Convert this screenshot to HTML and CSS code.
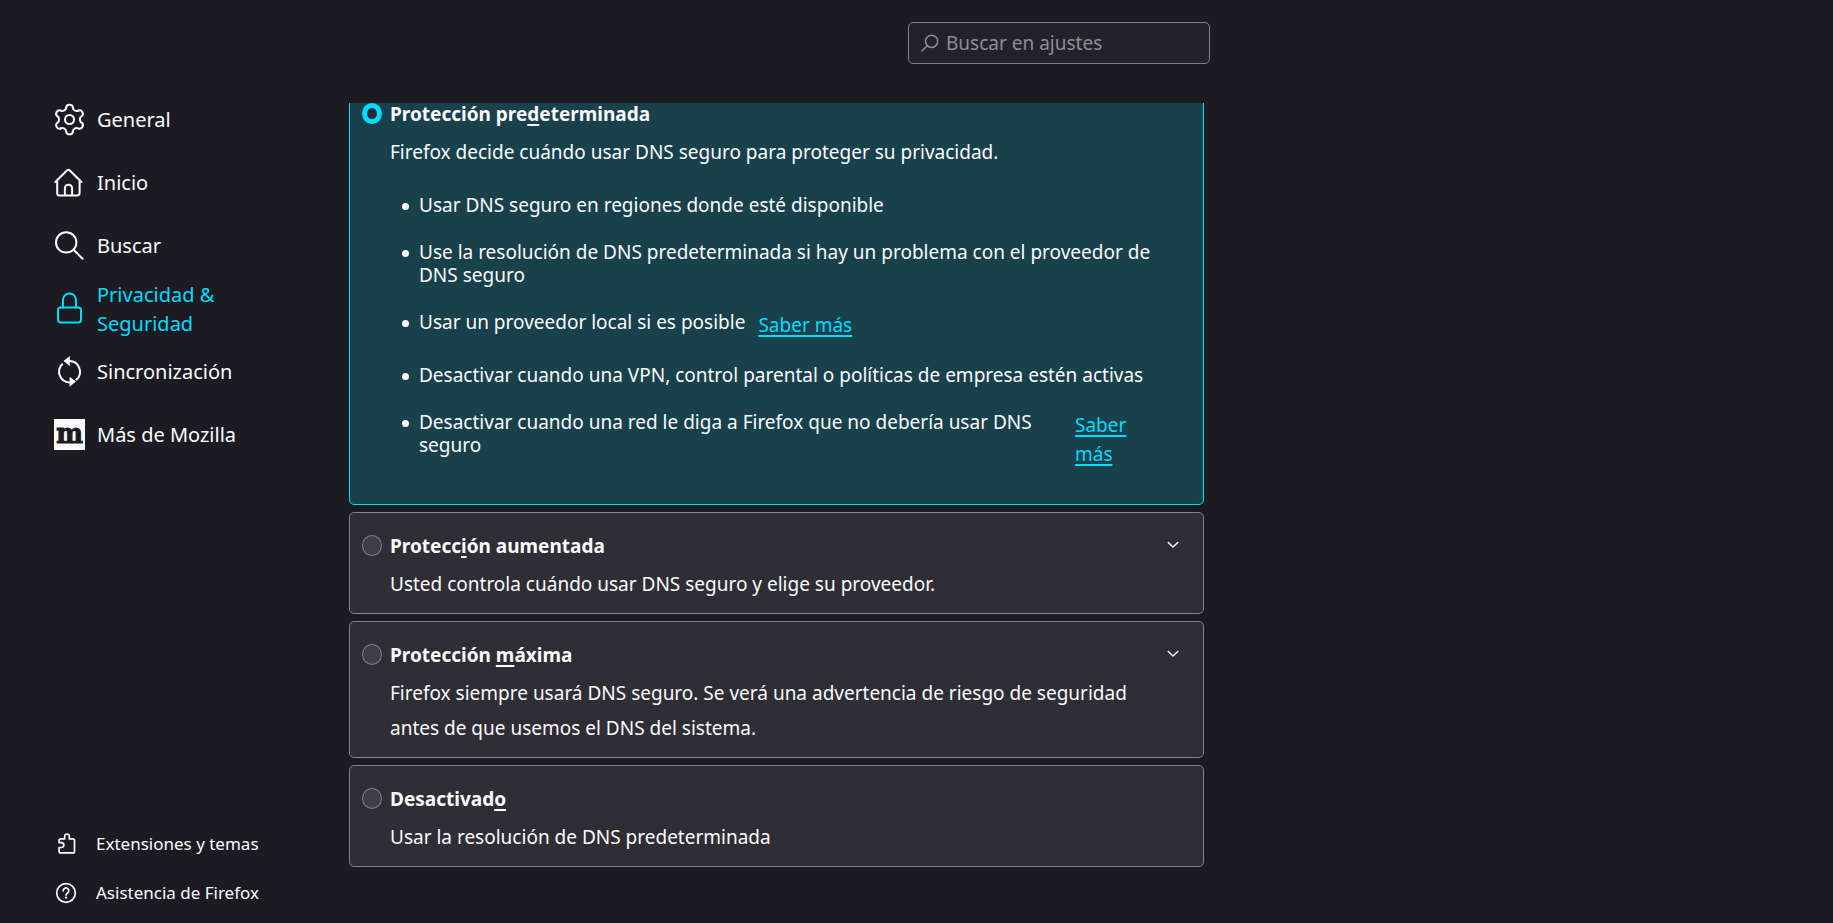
FILE: index.html
```html
<!DOCTYPE html>
<html lang="es">
<head>
<meta charset="utf-8">
<title>Ajustes</title>
<meta name="viewport" content="width=device-width, initial-scale=1">
<link rel="stylesheet" href="styles.css">
</head>
<body>
<div class="page">
  <aside class="sidebar">
    <nav class="categories" aria-label="Categorías">
      <a class="category" href="#general">
        <svg class="category-icon" viewBox="0 0 31 31" aria-hidden="true">
          <g transform="translate(15.5 15.5)">
            <path id="tooth" d="M-3.3-11.9C-3.3-15.8 3.3-15.8 3.3-11.9C3.3-9.5 6.6-7.6 8.66-8.81"/>
            <use href="#tooth" transform="rotate(60)"/>
            <use href="#tooth" transform="rotate(120)"/>
            <use href="#tooth" transform="rotate(180)"/>
            <use href="#tooth" transform="rotate(240)"/>
            <use href="#tooth" transform="rotate(300)"/>
            <circle r="4.5"/>
          </g>
        </svg>
        <span>General</span>
      </a>
      <a class="category" href="#inicio">
        <svg class="category-icon" viewBox="0 0 31 31" aria-hidden="true">
          <path d="M1.3 15L13.2 3.3a1.7 1.7 0 0 1 2.4 0L27.5 15M3.2 13.5v12.7a2.3 2.3 0 0 0 2.3 2.3h17.8a2.3 2.3 0 0 0 2.3-2.3V13.5M10.9 28.4v-7.3a3.3 3.3 0 0 1 3.3-3.3h.6a3.3 3.3 0 0 1 3.3 3.3v7.3"/>
        </svg>
        <span>Inicio</span>
      </a>
      <a class="category" href="#buscar">
        <svg class="category-icon" viewBox="0 0 31 31" aria-hidden="true">
          <circle cx="12.2" cy="12.4" r="10.2"/><path d="M19.6 19.8L28.6 28.8"/>
        </svg>
        <span>Buscar</span>
      </a>
      <a class="category selected" href="#privacidad" aria-current="page">
        <svg class="category-icon" viewBox="0 0 31 31" aria-hidden="true">
          <rect x="4" y="14.4" width="23" height="15" rx="2.6"/><path d="M9 14.4V7a6.5 6.5 0 0 1 13 0v7.4"/>
        </svg>
        <span>Privacidad &amp; Seguridad</span>
      </a>
      <a class="category" href="#sincronizacion">
        <svg class="category-icon" viewBox="0 0 31 31" aria-hidden="true">
          <path d="M15.3 5a10.7 10.7 0 0 1 7.2 18.6M8.2 8.2a10.7 10.7 0 0 0 7.2 18.2"/>
          <path class="solid" d="M15.8 0v10L9.5 4.9zM15.6 20.8v10l6.3-5.3z"/>
        </svg>
        <span>Sincronización</span>
      </a>
      <a class="category" href="#mozilla">
        <span class="mozilla-mark" aria-hidden="true">m</span>
        <span>Más de Mozilla</span>
      </a>
    </nav>
    <div class="shortcuts">
      <a class="shortcut" href="#extensiones">
        <svg class="shortcut-icon" viewBox="0 0 24 24" aria-hidden="true">
          <path d="M10.7 6.9V4.3a2.3 2.3 0 0 1 4.6 0v2.6h3.5a1.7 1.7 0 0 1 1.7 1.7v10.6a1.7 1.7 0 0 1-1.7 1.7H6.8a1.7 1.7 0 0 1-1.7-1.7v-3.7h2.3a2.4 2.4 0 0 0 0-4.8H5.1V8.6a1.7 1.7 0 0 1 1.7-1.7z"/>
        </svg>
        <span>Extensiones y temas</span>
      </a>
      <a class="shortcut" href="#asistencia">
        <svg class="shortcut-icon" viewBox="0 0 24 24" aria-hidden="true">
          <circle cx="12" cy="12" r="9.3"/>
          <path d="M9.2 9.9a2.8 2.8 0 1 1 4.4 2.2c-.9.7-1.6 1-1.6 2"/>
          <circle class="solid" cx="12" cy="16.6" r="1.2"/>
        </svg>
        <span>Asistencia de Firefox</span>
      </a>
    </div>
  </aside>

  <main class="main">
    <div class="search-row">
      <label class="search">
        <svg class="search-icon" viewBox="0 0 18 18" aria-hidden="true">
          <circle cx="10.6" cy="7.3" r="6.1"/><path d="M6.2 11.8L1 17"/>
        </svg>
        <input class="search-input" type="search" placeholder="Buscar en ajustes" aria-label="Buscar en ajustes">
      </label>
    </div>

    <div class="scroller">
      <div class="options">
        <section class="card checked">
          <input class="radio" type="radio" name="dns" id="dns-default" checked>
          <div class="card-body">
            <label class="card-title" for="dns-default">Protección pre<u>d</u>eterminada</label>
            <p class="card-text">Firefox decide cuándo usar DNS seguro para proteger su privacidad.</p>
            <ul class="details">
              <li class="detail"><span>Usar DNS seguro en regiones donde esté disponible</span></li>
              <li class="detail"><span>Use la resolución de DNS predeterminada si hay un problema con el proveedor de DNS seguro</span></li>
              <li class="detail"><span>Usar un proveedor local si es posible</span><a class="learn-more" href="#local">Saber más</a></li>
              <li class="detail"><span>Desactivar cuando una VPN, control parental o políticas de empresa estén activas</span></li>
              <li class="detail"><span class="fill">Desactivar cuando una red le diga a Firefox que no debería usar DNS seguro</span><a class="learn-more narrow" href="#red">Saber más</a></li>
            </ul>
          </div>
        </section>

        <section class="card">
          <input class="radio" type="radio" name="dns" id="dns-increased">
          <div class="card-body">
            <label class="card-title" for="dns-increased">Protecc<u>i</u>ón aumentada</label>
            <p class="card-text">Usted controla cuándo usar DNS seguro y elige su proveedor.</p>
          </div>
          <button class="expander" type="button" aria-label="Mostrar detalles de protección aumentada">
            <svg class="chevron" viewBox="0 0 12 8" aria-hidden="true"><path d="M1.2 1.5L6 6l4.8-4.5"/></svg>
          </button>
        </section>

        <section class="card">
          <input class="radio" type="radio" name="dns" id="dns-max">
          <div class="card-body">
            <label class="card-title" for="dns-max">Protección <u>m</u>áxima</label>
            <p class="card-text">Firefox siempre usará DNS seguro. Se verá una advertencia de riesgo de seguridad antes de que usemos el DNS del sistema.</p>
          </div>
          <button class="expander" type="button" aria-label="Mostrar detalles de protección máxima">
            <svg class="chevron" viewBox="0 0 12 8" aria-hidden="true"><path d="M1.2 1.5L6 6l4.8-4.5"/></svg>
          </button>
        </section>

        <section class="card">
          <input class="radio" type="radio" name="dns" id="dns-off">
          <div class="card-body">
            <label class="card-title" for="dns-off">Desactivad<u>o</u></label>
            <p class="card-text">Usar la resolución de DNS predeterminada</p>
          </div>
        </section>
      </div>
    </div>
  </main>
</div>
</body>
</html>
```
FILE: styles.css
```css
:root {
  --bg: #1c1b22;
  --card: #2f2e34;
  --card-checked: #18414c;
  --line: #828187;
  --text: #fbfbfe;
  --accent: #00ddff;
}

* { box-sizing: border-box; }

body {
  margin: 0;
  background: var(--bg);
  color: var(--text);
  font-family: "Noto Sans", sans-serif;
  font-size: 19px;
  line-height: 29px;
}

.page {
  display: flex;
  height: 100vh;
  overflow: hidden;
}

.sidebar {
  flex: 0 0 349px;
  display: flex;
  flex-direction: column;
  justify-content: space-between;
  padding: 88px 72px 6px 54px;
}

.category {
  display: flex;
  align-items: center;
  gap: 12px;
  min-height: 63px;
  color: inherit;
  font-size: 20px;
  text-decoration: none;
}

.category.selected { color: var(--accent); }

.category-icon,
.shortcut-icon,
.search-icon,
.chevron {
  flex: none;
  fill: none;
  stroke: currentColor;
  stroke-width: 2;
  stroke-linecap: round;
  stroke-linejoin: round;
  overflow: visible;
}

.category-icon { width: 31px; height: 31px; }

.solid { fill: currentColor; stroke: none; }

.mozilla-mark {
  flex: none;
  display: flex;
  align-items: center;
  justify-content: center;
  width: 31px;
  height: 31px;
  padding-bottom: 2px;
  background: var(--text);
  color: var(--bg);
  font: bold 28px/24px "DejaVu Serif Condensed", "DejaVu Serif", serif;
  -webkit-text-stroke: 1px var(--bg);
}

.shortcut {
  display: flex;
  align-items: center;
  gap: 18px;
  height: 49px;
  color: inherit;
  font-size: 17px;
  text-decoration: none;
}

.shortcut-icon { width: 24px; height: 24px; stroke-width: 1.7; }

.main {
  flex: 1;
  min-width: 0;
  max-width: 861px;
  display: flex;
  flex-direction: column;
}

.search-row {
  flex: none;
  display: flex;
  justify-content: flex-end;
  height: 103px;
  padding-top: 22px;
}

.search {
  display: flex;
  align-items: center;
  gap: 7px;
  width: 302px;
  height: 42px;
  padding: 0 12px;
  border: 1px solid var(--line);
  border-radius: 5px;
  background: #23222b;
  color: #8e8d96;
}

.search-icon { width: 18px; height: 18px; stroke-width: 1.5; }

.search-input {
  flex: 1;
  min-width: 0;
  padding: 0;
  border: 0;
  outline: 0;
  background: transparent;
  color: var(--text);
  font: inherit;
}

.search-input::placeholder { color: #8e8d96; opacity: 1; }

.scroller {
  flex: 1;
  min-height: 0;
  overflow: hidden;
  padding-right: 6px;
}

/* The list is scrolled so that the first card starts above the viewport. */
.options {
  display: flex;
  flex-direction: column;
  gap: 7px;
  margin-top: -23px;
}

.card {
  display: flex;
  align-items: flex-start;
  padding: 19px 24px 11px 12px;
  border: 1px solid var(--line);
  border-radius: 5px;
  background: var(--card);
}

.card.checked {
  border-color: var(--accent);
  background: var(--card-checked);
}

.radio {
  appearance: none;
  flex: none;
  width: 20px;
  height: 21px;
  margin: 3px 8px 0 0;
  border: 1px solid var(--line);
  border-radius: 50%;
  background: #403e45;
}

.radio:checked {
  border: 5px solid var(--accent);
  background: #2b2a33;
}

.card-body { flex: 1; min-width: 0; }

.card-title {
  display: block;
  font-weight: 700;
}

.card-title u {
  text-decoration-thickness: 2px;
  text-underline-offset: 3px;
}

.card-text {
  margin: 6px 40px 0 0;
  line-height: 35px;
}

.details {
  margin: 24px 26px 24px 12px;
  padding: 0;
  display: flex;
  flex-direction: column;
  gap: 24px;
  list-style: none;
  line-height: 23px;
}

.detail {
  display: flex;
  align-items: flex-start;
}

.detail::before {
  content: "";
  flex: none;
  width: 7px;
  height: 7px;
  margin: 9px 10px 0 0;
  border-radius: 50%;
  background: var(--text);
}

.fill { flex: 1; }

.learn-more {
  flex: none;
  margin-left: 13px;
  color: var(--accent);
  line-height: 29px;
  text-decoration-thickness: 2px;
  text-underline-offset: 3px;
}

.learn-more.narrow { width: 78px; }

.expander {
  display: flex;
  margin: 9px 0 0;
  padding: 0;
  border: 0;
  background: none;
  color: inherit;
}

.chevron { width: 12px; height: 8px; stroke-width: 1.5; }
```
